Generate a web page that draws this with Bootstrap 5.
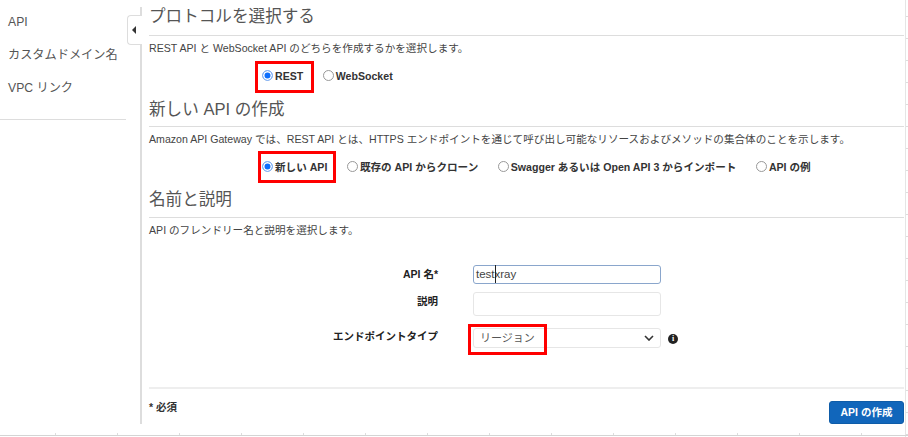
<!DOCTYPE html>
<html lang="ja">
<head>
<meta charset="utf-8">
<title>API</title>
<link href="https://cdn.jsdelivr.net/npm/bootstrap@5.3.0/dist/css/bootstrap.min.css" rel="stylesheet">
<style>
html,body{height:437px;overflow:hidden;background:#fff}
body{font-family:"Liberation Sans","Noto Sans CJK JP",sans-serif;color:#444;font-size:10.6px;position:relative}
.shell{height:424px;padding-top:7px}
.side{width:142px;height:417px;border-right:2px solid #ddd;position:relative;flex:none}
.side-list{width:126px;height:113px;border-bottom:1px solid #ddd;padding:0 0 0 8px;font-size:12.2px;color:#555}
.side-list div{height:32.8px;line-height:30px}
.tab{position:absolute;left:127px;top:8px;width:15px;height:30px;background:#fff;border:1px solid #ddd;border-right:0;border-radius:4px 0 0 4px}
.tab::after{content:"";position:absolute;left:4px;top:10px;border:4px solid transparent;border-right-color:#333;border-left:0}
.body-col{width:755px;margin-left:7px;flex:none}
.ttl{font-size:16.6px;line-height:24px;color:#555;border-bottom:1px solid #ddd;margin:0;font-weight:400}
.t1{height:32px;margin-top:-3px;padding-top:1px}
.t2{height:43px;padding-top:14px}
.t3{height:43px;padding-top:13px}
.dsc{line-height:14px;margin:5px 0 0;color:#444;font-size:10.6px}
.radios{display:flex;font-weight:700;color:#333;font-size:10.6px;line-height:14px;align-items:center;margin:13px 0 0 113px;height:16px}
.rad{display:flex;align-items:center;gap:3px;position:relative}
.rad+.rad{margin-left:19.5px}
.dot{width:11px;height:11px;border-radius:50%;border:1px solid #999;background:#fff;flex:none;margin-top:-1px;margin-right:-1px}
.dot.on{border-color:#8ab4f0;background:#0d6efd;box-shadow:inset 0 0 0 1.5px #fff}
.rad.mark-a::after,.rad.mark-b::after{content:"";position:absolute;border:3px solid #f00}
.rad.mark-a::after{left:-7px;top:-8px;width:59px;height:32px}
.rad.mark-b::after{left:-4px;top:-9px;width:78px;height:32px}
.frm{margin-top:28px}
.frow{display:flex;align-items:center}
.fr1{height:19px}
.fr2{height:24px;margin-top:8px}
.fr3{height:20px;margin-top:12px}
.lbl{width:289px;text-align:right;font-weight:700;color:#222;font-size:10.5px;flex:none}
.fr2 .lbl{margin-top:-5px}
.fr3 .lbl{margin-top:-3px}
.fld{margin-left:35px;width:188px;flex:none;position:relative}
.inp{display:block;width:100%;font-size:11.5px;color:#444;background:#fff;border:1px solid #e6e6e6;border-radius:3px;padding:0 2px;font-family:inherit}
.inp.act{height:19px;border-color:#8aa6cc;line-height:17px;position:relative}
.inp.act::after{content:"";position:absolute;left:21px;top:-1px;width:1px;height:18px;background:#222}
.inp.emp{height:24px}
.inp.sel{height:20px;padding:0 6px;font-size:11px;line-height:18px;display:flex;align-items:center;justify-content:space-between;color:#555}
.fld.mark-c::after{content:"";position:absolute;left:-5px;top:-4px;width:79px;height:31px;border:3px solid #f00}
.info{width:10px;height:10px;border-radius:50%;background:#222;color:#fff;font:700 8px/10px "Liberation Serif",serif;text-align:center;margin-left:7px;margin-top:1px;flex:none}
.ftr{border-top:2px solid #eee;margin-top:39px;display:flex;justify-content:space-between;height:46px;padding-top:9px}
.req{font-weight:700;color:#333;font-size:10.5px;line-height:14px;padding-top:2px}
.go{background:#1166bb;border:1px solid #0e5ca8;color:#fff;font-weight:700;font-size:10.5px;height:23px;width:75px;padding:0;border-radius:3px;margin-top:3px}
.edge{position:absolute;left:905px;top:0;height:437px;width:3px;border-left:1px solid #e5e5e5;background:repeating-linear-gradient(to bottom,transparent 0 16px,#ddd 16px 17px,transparent 17px 22px)}
.floor{position:absolute;left:0;right:0;top:433px;height:3px;border-bottom:1px solid #d4d4d4;background:repeating-linear-gradient(to right,transparent 0 55px,#ddd 55px 56px,transparent 56px 62px)}
</style>
</head>
<body>
<div class="d-flex shell">
  <aside class="side">
    <div class="side-list">
      <div>API</div>
      <div>カスタムドメイン名</div>
      <div>VPC リンク</div>
    </div>
    <div class="tab"></div>
  </aside>
  <main class="body-col">
    <h2 class="ttl t1">プロトコルを選択する</h2>
    <p class="dsc">REST API と WebSocket API のどちらを作成するかを選択します。</p>
    <div class="radios">
      <span class="rad mark-a"><span class="dot on"></span>REST</span>
      <span class="rad"><span class="dot"></span>WebSocket</span>
    </div>
    <h2 class="ttl t2">新しい API の作成</h2>
    <p class="dsc">Amazon API Gateway では、REST API とは、HTTPS エンドポイントを通じて呼び出し可能なリソースおよびメソッドの集合体のことを示します。</p>
    <div class="radios">
      <span class="rad mark-b"><span class="dot on"></span>新しい API</span>
      <span class="rad"><span class="dot"></span>既存の API からクローン</span>
      <span class="rad"><span class="dot"></span>Swagger あるいは Open API 3 からインポート</span>
      <span class="rad"><span class="dot"></span>API の例</span>
    </div>
    <h2 class="ttl t3">名前と説明</h2>
    <p class="dsc">API のフレンドリー名と説明を選択します。</p>
    <div class="frm">
      <div class="frow fr1"><div class="lbl">API 名*</div><div class="fld"><div class="inp act">testxray</div></div></div>
      <div class="frow fr2"><div class="lbl">説明</div><div class="fld"><div class="inp emp"></div></div></div>
      <div class="frow fr3"><div class="lbl">エンドポイントタイプ</div><div class="fld mark-c"><div class="inp sel">リージョン<svg width="10" height="6" viewBox="0 0 10 6"><path d="M1 1l4 4 4-4" fill="none" stroke="#333" stroke-width="1.6"/></svg></div></div><span class="info">i</span></div>
    </div>
    <div class="ftr">
      <div class="req">* 必須</div>
      <button type="button" class="btn go">API の作成</button>
    </div>
  </main>
</div>
<div class="edge"></div>
<div class="floor"></div>
</body>
</html>
